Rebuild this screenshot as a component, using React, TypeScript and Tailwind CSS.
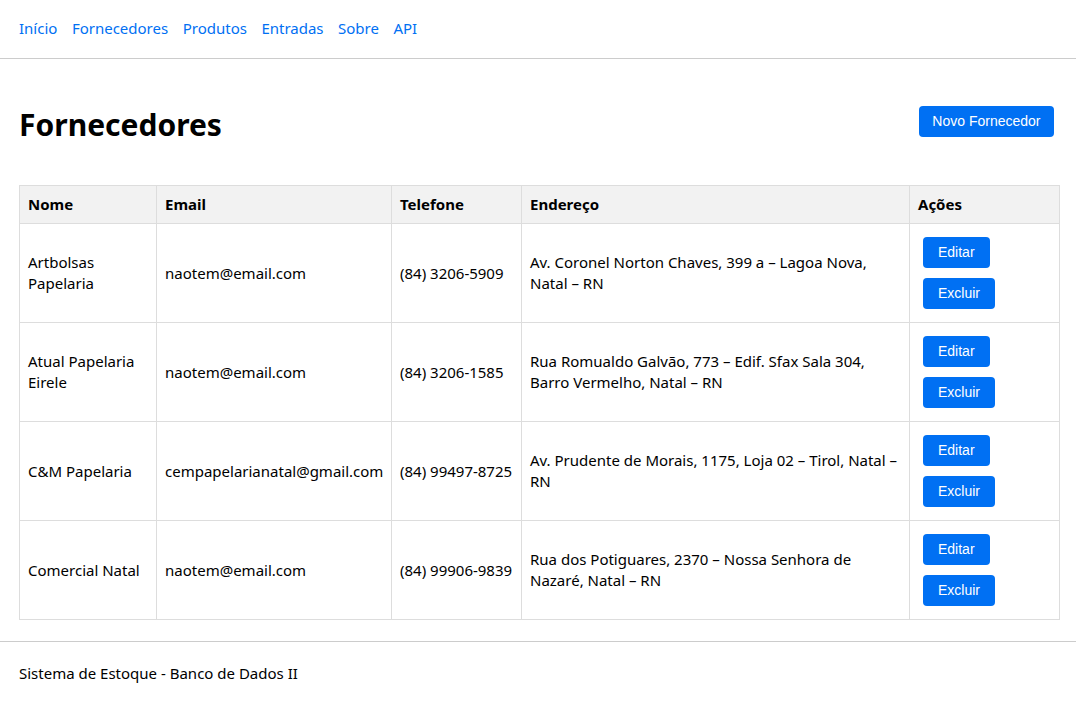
const fornecedores = [
  {
    nome: "Artbolsas Papelaria",
    email: "naotem@email.com",
    telefone: "(84) 3206-5909",
    endereco: "Av. Coronel Norton Chaves, 399 a – Lagoa Nova, Natal – RN",
  },
  {
    nome: "Atual Papelaria Eirele",
    email: "naotem@email.com",
    telefone: "(84) 3206-1585",
    endereco: "Rua Romualdo Galvão, 773 – Edif. Sfax Sala 304, Barro Vermelho, Natal – RN",
  },
  {
    nome: "C&M Papelaria",
    email: "cempapelarianatal@gmail.com",
    telefone: "(84) 99497-8725",
    endereco: "Av. Prudente de Morais, 1175, Loja 02 – Tirol, Natal – RN",
  },
  {
    nome: "Comercial Natal",
    email: "naotem@email.com",
    telefone: "(84) 99906-9839",
    endereco: "Rua dos Potiguares, 2370 – Nossa Senhora de Nazaré, Natal – RN",
  },
];

const links = ["Início", "Fornecedores", "Produtos", "Entradas", "Sobre", "API"];

const App = () => {
  return (
    <div className="min-h-[707px] bg-white text-black text-[15px] leading-[21px] font-['Noto_Sans',sans-serif]">
      <nav className="h-[59px] flex items-start pt-[18px] gap-[14.5px] px-[19px] border-b border-[#cccccc]">
        {links.map((l) => (
          <a key={l} href="#" className="text-[#0070f3]">
            {l}
          </a>
        ))}
      </nav>

      <main className="px-[19px] pt-[44px]">
        <div className="flex justify-between items-start">
          <h1 className="text-[30px] leading-[43px] font-bold">Fornecedores</h1>
          <button className="mt-[3px] mr-[3px] h-[31px] px-[13.5px] rounded-[4px] bg-[#0070f3] text-white text-[14px] font-['Liberation_Sans',sans-serif]">
            Novo Fornecedor
          </button>
        </div>

        <table className="mt-[39px] w-[1040px] table-fixed border-collapse">
          <colgroup>
            <col className="w-[137px]" />
            <col className="w-[235px]" />
            <col className="w-[130px]" />
            <col className="w-[388px]" />
            <col className="w-[150px]" />
          </colgroup>
          <thead>
            <tr className="bg-[#f2f2f2]">
              {["Nome", "Email", "Telefone", "Endereço", "Ações"].map((h) => (
                <th key={h} className="border border-[#dddddd] p-2 text-left font-bold">
                  {h}
                </th>
              ))}
            </tr>
          </thead>
          <tbody>
            {fornecedores.map((f) => (
              <tr key={f.nome}>
                <td className="border border-[#dddddd] p-2">{f.nome}</td>
                <td className="border border-[#dddddd] p-2">{f.email}</td>
                <td className="border border-[#dddddd] p-2 whitespace-nowrap">{f.telefone}</td>
                <td className="border border-[#dddddd] p-2">{f.endereco}</td>
                <td className="border border-[#dddddd] p-2">
                  <div className="flex flex-col items-start gap-[10px] p-[5px] font-['Liberation_Sans',sans-serif] text-[14px]">
                    <button className="h-[31px] px-[15px] rounded-[4px] bg-[#0070f3] text-white">
                      Editar
                    </button>
                    <button className="h-[31px] px-[15px] rounded-[4px] bg-[#0070f3] text-white">
                      Excluir
                    </button>
                  </div>
                </td>
              </tr>
            ))}
          </tbody>
        </table>
      </main>

      <footer className="mt-[21px] border-t border-[#cccccc] px-[19px] pt-[21px] pb-[25px]">
        Sistema de Estoque - Banco de Dados II
      </footer>
    </div>
  );
};

export default App;
